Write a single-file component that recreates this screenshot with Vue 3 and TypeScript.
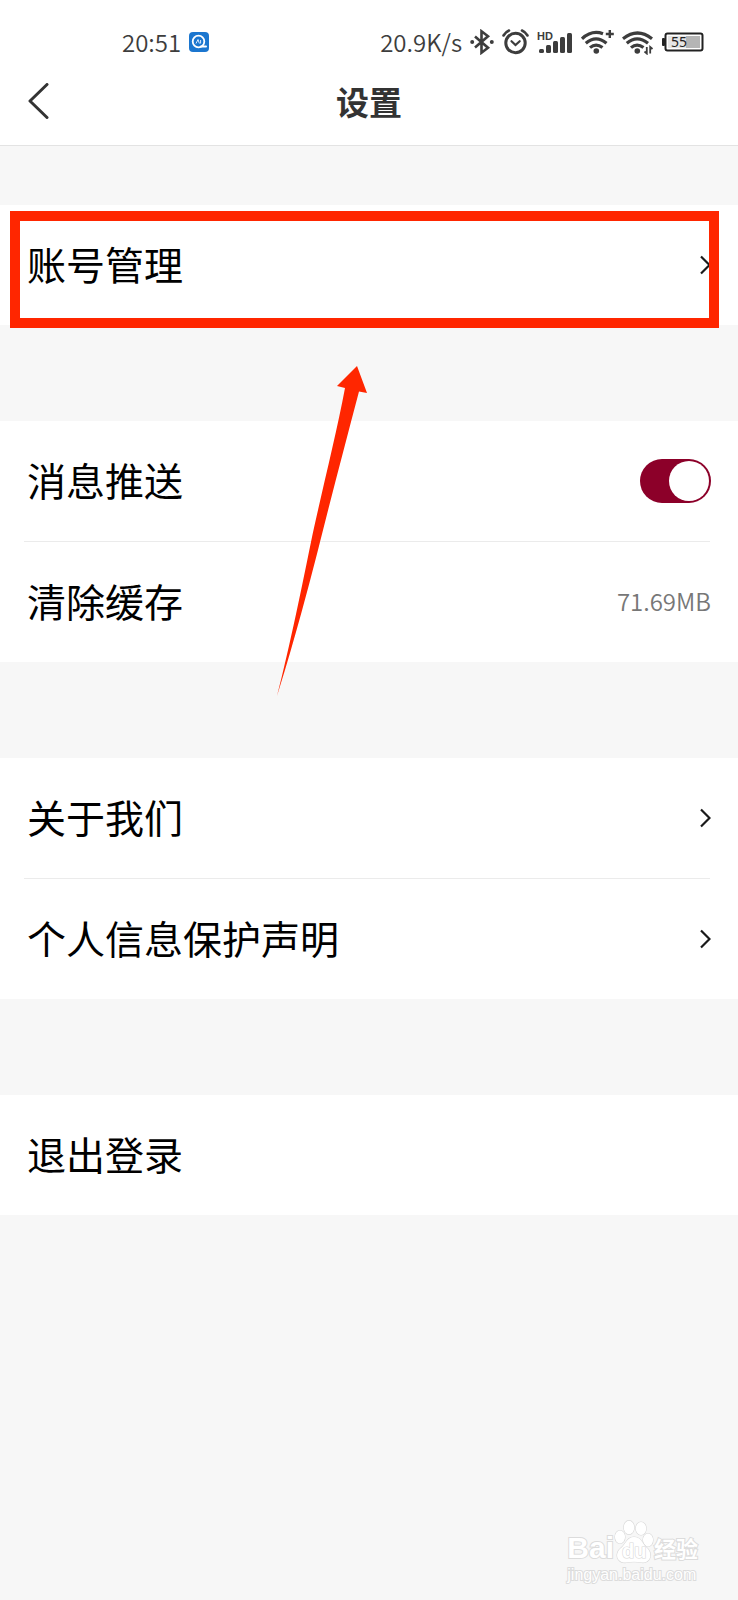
<script setup lang="ts">
import { ref } from 'vue'

interface Row {
  id: string
  label: string
  kind: 'link' | 'switch' | 'value' | 'action'
  value?: string
}

interface Group {
  id: string
  marked?: boolean
  rows: Row[]
}

const pushEnabled = ref(true)

const groups: Group[] = [
  { id: 'account', marked: true, rows: [{ id: 'account-row', label: '账号管理', kind: 'link' }] },
  {
    id: 'general',
    rows: [
      { id: 'push', label: '消息推送', kind: 'switch' },
      { id: 'cache', label: '清除缓存', kind: 'value', value: '71.69MB' },
    ],
  },
  {
    id: 'about',
    rows: [
      { id: 'about-us', label: '关于我们', kind: 'link' },
      { id: 'privacy', label: '个人信息保护声明', kind: 'link' },
    ],
  },
  { id: 'session', rows: [{ id: 'logout', label: '退出登录', kind: 'action' }] },
]
</script>

<template>
  <div class="page">
    <header class="top">
      <div class="status">
        <span class="clock">20:51</span>
        <svg class="app-badge" width="20" height="20" viewBox="0 0 20 20" aria-hidden="true">
          <rect width="20" height="20" rx="4" fill="#1b76cf" />
          <circle cx="9.5" cy="9.5" r="5.8" fill="none" stroke="#fff" stroke-width="1.8" />
          <path d="M12 14.5h5" stroke="#fff" stroke-width="2" stroke-linecap="round" />
          <path d="M7 11.5l2-4 1.4 4M11.6 8v3.5" fill="none" stroke="#d8eaff" stroke-width="1" />
        </svg>

        <div class="indicators">
          <span>20.9K/s</span>
          <svg width="24" height="26" viewBox="0 0 24 26" fill="none" stroke="#3d3d3d" stroke-width="2.6" aria-hidden="true">
            <path d="M5 7.5l13 11.2-6.5 5V2.3l6.5 5L5 18.5" />
            <circle cx="2.2" cy="13" r="2" fill="#3d3d3d" stroke="none" />
            <circle cx="21.8" cy="13" r="2" fill="#3d3d3d" stroke="none" />
          </svg>
          <svg width="27" height="26" viewBox="0 0 27 26" fill="none" stroke="#3d3d3d" stroke-linecap="round" aria-hidden="true">
            <circle cx="13.5" cy="14" r="9.7" stroke-width="3" />
            <path d="M9.5 12.2l4 3.8 4.2-3.8" stroke-width="2.2" />
            <path d="M1.5 6.5Q3.5 3 7 1.5M25.5 6.5Q23.5 3 20 1.5" stroke-width="2.6" />
          </svg>
          <svg class="signal" width="36" height="26" viewBox="0 0 36 26" aria-hidden="true">
            <text class="hd" x="0" y="11">HD</text>
            <g fill="#3d3d3d">
              <rect x="2" y="20" width="5" height="4" rx="1.5" />
              <rect x="9" y="16" width="5" height="8" rx="1.5" />
              <rect x="16" y="12" width="5" height="12" rx="1.5" />
              <rect x="23" y="8" width="5" height="16" rx="1.5" />
              <rect x="30" y="4" width="5" height="20" rx="1.5" />
            </g>
          </svg>
          <svg width="33" height="26" viewBox="0 0 33 26" fill="none" stroke="#3d3d3d" stroke-width="3.2" aria-hidden="true">
            <path d="M1 9.8Q11 .6 22 4.8M4.8 14.3Q15 5.5 25.5 14.3M9 18.6Q15 13.5 21.5 18.6" />
            <circle cx="15.3" cy="22" r="2.8" fill="#3d3d3d" stroke="none" />
            <path d="M28.8 1v8M24.8 5h8" stroke-width="2.4" />
          </svg>
          <svg width="32" height="26" viewBox="0 0 32 26" fill="none" stroke="#3d3d3d" stroke-width="3.2" aria-hidden="true">
            <path d="M1 9.8Q15.5-1.8 30 9.8M4.8 14.3Q15 5.5 26 14.3M9 18.6Q15 13.5 21.5 18.6" />
            <circle cx="15.3" cy="22" r="2.8" fill="#3d3d3d" stroke="none" />
            <path d="M24.8 18v6.5l-2.3-2M28.2 24.5v-6.5l2.3 2" stroke-width="1.8" />
          </svg>
          <svg class="battery" width="42" height="20" viewBox="0 0 42 20" aria-hidden="true">
            <rect x="0" y="6" width="3" height="8" rx="1" fill="#222" />
            <rect x="3.5" y="1.5" width="37" height="17" rx="2" fill="#fff" stroke="#222" stroke-width="2" />
            <rect x="6" y="4" width="32" height="12" fill="#b5b5b5" />
            <rect x="6" y="4" width="18" height="12" fill="#e6e6e6" />
            <text class="charge" x="9" y="15">55</text>
          </svg>
        </div>
      </div>

      <nav class="nav">
        <button class="back" type="button" aria-label="返回">
          <svg width="22" height="36" viewBox="0 0 22 36" fill="none" stroke="#333" stroke-width="3" stroke-linecap="round" stroke-linejoin="round">
            <path d="M19 1.5L2 18l17 16.5" />
          </svg>
        </button>
        <h1 class="title">设置</h1>
      </nav>
    </header>

    <main class="groups">
      <section v-for="group in groups" :key="group.id" class="group">
        <template v-for="row in group.rows" :key="row.id">
          <label v-if="row.kind === 'switch'" class="row" :for="row.id">
            <span class="label">{{ row.label }}</span>
            <input :id="row.id" v-model="pushEnabled" class="switch" type="checkbox" role="switch" />
          </label>
          <a v-else-if="row.kind === 'link'" class="row" href="#">
            <span class="label">{{ row.label }}</span>
            <svg width="11" height="20" viewBox="0 0 11 20" fill="none" stroke="#1a1a1a" stroke-width="2.2" aria-hidden="true">
              <path d="M1 1.5L9.5 10 1 18.5" />
            </svg>
          </a>
          <button v-else class="row" type="button">
            <span class="label">{{ row.label }}</span>
            <span v-if="row.value" class="value">{{ row.value }}</span>
          </button>
        </template>
        <div v-if="group.marked" class="marker"></div>
      </section>
    </main>

    <svg class="arrow" width="92" height="330" viewBox="0 0 92 330" aria-hidden="true">
      <path d="M81 0L91 27 83 25.5C70 75 56 128 44 176S14 290 1 330C14 280 27 215 35 176S60 70 69 22L61 20Z" fill="#ff2600" />
    </svg>

    <div class="watermark">
      <div class="brand">
        <span class="bai">Bai</span>
        <svg width="40" height="44" viewBox="0 0 40 44" fill="#fff" stroke="#d9d9d9" stroke-width="1.2" aria-hidden="true">
          <ellipse cx="6" cy="17" rx="5" ry="6.5" />
          <ellipse cx="15" cy="7.5" rx="5.2" ry="6.8" />
          <ellipse cx="27" cy="8.5" rx="5.2" ry="6.5" />
          <ellipse cx="34" cy="20" rx="5" ry="6.5" />
          <path d="M20 17C27 17 28 23 32 27C40 34 36 43 28 42.5Q20 41 12 42.5C3 43 0 34 7 28C12 24 13 17 20 17Z" />
          <text class="du" x="8" y="38">du</text>
        </svg>
        <span class="jingyan">经验</span>
      </div>
      <div class="site">jingyan.baidu.com</div>
    </div>
  </div>
</template>

<style>
body {
  margin: 0;
  background: #f7f7f7;
}
</style>

<style scoped>
.page {
  position: relative;
  min-height: 100vh;
  overflow: hidden;
  background: #f7f7f7;
  color: #000;
  font-family: 'Noto Sans CJK SC', 'Noto Sans', sans-serif;
}

.top {
  background: #fff;
  border-bottom: 1px solid #e3e3e3;
}

.status {
  display: flex;
  align-items: center;
  box-sizing: border-box;
  height: 60px;
  padding: 24px 34px 0 122px;
  color: #3d3d3d;
  font-size: 24px;
  font-weight: 350;
  line-height: 36px;
}

.app-badge {
  margin-left: 8px;
}

.indicators {
  display: flex;
  align-items: center;
  gap: 8px;
  margin-left: auto;
}

.signal,
.battery {
  overflow: visible;
}

.hd {
  font: 700 11px/1 'Liberation Sans', sans-serif;
  fill: #3d3d3d;
}

.charge {
  font: 400 14px/1 'Noto Sans', sans-serif;
  fill: #222;
}

.nav {
  display: grid;
  grid-template-columns: 1fr auto 1fr;
  align-items: center;
  box-sizing: border-box;
  height: 85px;
  padding: 0 28px 4px;
}

.back {
  display: flex;
  justify-self: start;
  padding: 0;
  border: 0;
  background: none;
}

.title {
  margin: 0;
  color: #333;
  font-size: 33px;
  font-weight: 700;
  line-height: 48px;
}

.groups {
  display: flex;
  flex-direction: column;
  gap: 96px;
  padding-top: 59px;
}

.group {
  position: relative;
  background: #fff;
}

.row {
  display: flex;
  align-items: center;
  justify-content: space-between;
  box-sizing: border-box;
  width: 100%;
  height: 120px;
  padding: 0 27px;
  border: 0;
  background: none;
  color: #000;
  font-family: inherit;
  font-size: 39px;
  font-weight: 400;
  line-height: 56px;
  text-align: left;
  text-decoration: none;
}

.row + .row {
  height: 121px;
  border-top: 1px solid transparent;
  background: linear-gradient(#ebebeb, #ebebeb) 24px 0 / calc(100% - 52px) 1px no-repeat border-box;
}

.label {
  padding-bottom: 4px;
}

.value {
  padding-bottom: 2px;
  color: #777;
  font-size: 24px;
  font-weight: 350;
}

.switch {
  appearance: none;
  display: flex;
  align-items: center;
  justify-content: flex-end;
  box-sizing: border-box;
  width: 71px;
  height: 44px;
  margin: 0;
  padding: 2px;
  border-radius: 22px;
  background: #8c0029;
}

.switch::before {
  content: '';
  width: 40px;
  height: 40px;
  border-radius: 50%;
  background: #fff;
}

.switch:not(:checked) {
  justify-content: flex-start;
  background: #ccc;
}

.marker {
  position: absolute;
  inset: 6px 19px -3px 10px;
  border: 10px solid #ff2600;
  pointer-events: none;
}

.arrow {
  position: absolute;
  top: 366px;
  left: 276px;
  pointer-events: none;
}

.watermark {
  position: absolute;
  right: 40px;
  bottom: 14px;
  color: #fff;
  font-family: 'Liberation Sans', 'Noto Sans CJK SC', sans-serif;
  -webkit-text-stroke: 2px #dcdcdc;
  paint-order: stroke fill;
}

.brand {
  display: flex;
  align-items: flex-end;
}

.bai {
  font-size: 30px;
  font-weight: 700;
  line-height: 32px;
}

.du {
  font: 700 20px 'Liberation Sans', sans-serif;
}

.jingyan {
  font-size: 22px;
  font-weight: 700;
  line-height: 28px;
}

.site {
  font-size: 16px;
  line-height: 22px;
}
</style>
